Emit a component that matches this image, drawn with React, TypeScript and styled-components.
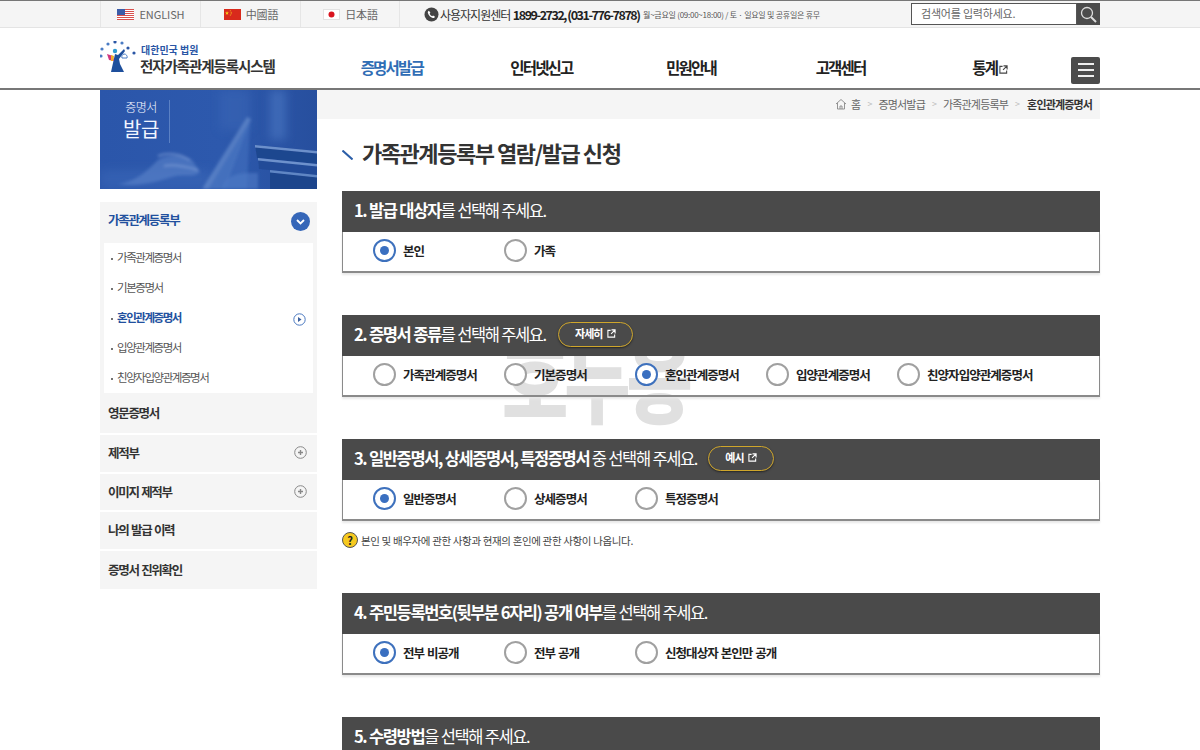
import React from "react";
import styled, { createGlobalStyle } from "styled-components";

const Global = createGlobalStyle`
  html, body { margin: 0; padding: 0; height: 750px; overflow: hidden; background: #fff; }
  body { font-family: "Noto Sans CJK KR", "Noto Sans", sans-serif; color: #333; }
  * { box-sizing: border-box; }
`;

const Wrap = styled.div`width: 1000px; margin: 0 auto; display: flex; align-items: stretch;`;

const TopBar = styled.div`
  height: 28px; background: #f5f5f5; border-top: 1px solid #777; border-bottom: 1px solid #e4e4e4;
`;
const LangCell = styled.a`
  width: 100px; display: flex; align-items: center; justify-content: center; gap: 3px;
  border-left: 1px solid #e6e6e6; font-size: 11px; color: #666; height: 26px; letter-spacing: -0.1px; padding-left: 1px;
  &:nth-child(3) { border-right: 1px solid #e6e6e6; }
`;
const Flag = styled.svg`width: 17px; height: 11px; display: block; margin-right: 2px;`;
const Support = styled.div`
  margin-left: 24px; display: flex; align-items: center; height: 26px; color: #333; font-size: 12px; letter-spacing: -1px; white-space: nowrap;
  svg { margin-right: 1px; }
  b { font-weight: 700; margin-left: 2.5px; font-size: 12.5px; letter-spacing: -1.45px; color: #222; }
  small { font-size: 8px; margin-left: 3.5px; color: #555; letter-spacing: -0.25px; }
`;
const Search = styled.div`
  margin-left: auto; display: flex; height: 22px; margin-top: 2px; width: 189px;
`;
const SearchInput = styled.div`
  flex: 1; border: 1px solid #555; background: #fff; font-size: 11px; color: #666; padding-left: 9px; line-height: 18px; letter-spacing: -0.2px;
`;
const SearchBtn = styled.div`width: 23px; background: #4c4c4c; display: flex; align-items: center; justify-content: center;`;

const Header = styled.div`height: 62px; border-bottom: 2px solid #777;`;
const HeaderIn = styled(Wrap)`height: 60px; align-items: center;`;
const Logo = styled.div`width: 217px; display: flex; align-items: center; height: 100%; padding-top: 2px;`;
const LogoText = styled.div`
  margin-left: 5px; display: flex; flex-direction: column;
  span { font-size: 10px; color: #2a56a5; font-weight: 700; line-height: 12px; letter-spacing: 0; padding-top: 1px; }
  strong { font-size: 14.5px; color: #333; font-weight: 700; line-height: 20px; letter-spacing: -1.1px; margin-left: -1px; }
`;
const Nav = styled.nav`flex: 1; display: flex; padding-top: 17px;`;
const NavItem = styled.a<{ $on?: boolean }>`
  flex: 1; text-align: center; font-size: 15.5px; font-weight: 700; letter-spacing: -1.8px;
  color: ${p => (p.$on ? "#2f6db5" : "#222")};
  svg { margin-left: 2px; vertical-align: 0; }
`;
const MenuBtn = styled.div`
  width: 29px; height: 27px; background: #4b4b4b; border-radius: 2px; margin-left: 6px; margin-top: 24px;
  display: flex; flex-direction: column; justify-content: center; align-items: center; gap: 4px;
  i { display: block; width: 16px; height: 2px; background: #eee; }
`;

const Side = styled.aside`width: 217px; flex: none;`;
const Banner = styled.div`height: 99px; position: relative; background: #2a56a8; overflow: hidden; svg { display: block; }`;
const BannerText = styled.div`
  position: absolute; left: 20px; top: 9px; color: #f2f5ff; text-align: center; width: 42px; font-weight: 300;
  span { display: block; font-size: 12px; line-height: 15px; letter-spacing: -0.6px; }
  b { display: block; font-size: 20px; line-height: 30px; font-weight: 400; letter-spacing: -0.5px; }
`;
const SideMenu = styled.ul`list-style: none; margin: 13px 0 0; padding: 0; background: #f5f5f5;`;
const SideItem = styled.li<{ $sep?: boolean; $first?: boolean; $h?: number; $pb?: number }>`
  height: ${p => p.$h ?? 39}px;
  padding: 0 10px ${p => (p.$pb ?? 2)}px 8px;
  display: flex; align-items: center; justify-content: space-between;
  font-size: 12.5px; font-weight: 700; letter-spacing: -1.3px; word-spacing: 1px; color: ${p => (p.$first ? "#22509e" : "#333")};
  border-bottom: ${p => (p.$sep ? "2px solid #fff" : "none")};
  svg { display: block; }
`;
const FirstIconGap = styled.span`display: block; margin-right: -3px; margin-top: 4px;`;
const SubMenu = styled.ul`list-style: none; margin: 0 4px; padding: 0; background: #fff; height: 150px;`;
const SubItem = styled.li<{ $on?: boolean }>`
  height: 30px; display: flex; align-items: center; justify-content: space-between; padding: 0 7px 2px 7px;
  font-size: 11.5px; letter-spacing: -1.45px; color: ${p => (p.$on ? "#22509e" : "#555")}; font-weight: ${p => (p.$on ? 700 : 400)};
  span::before { content: ""; display: inline-block; width: 2px; height: 2px; border-radius: 50%; background: #444; margin-right: 4px; vertical-align: 2px; }
  svg { margin-top: 4px; }
`;

const Main = styled.main`flex: 1; position: relative;`;
const Crumbs = styled.div`
  height: 29px; background: #f5f5f5; display: flex; align-items: center; justify-content: flex-end; padding: 0 8px 2px 0;
  font-size: 11px; color: #666; letter-spacing: -0.85px;
  em { font-style: normal; color: #bbb; margin: 0 7px; font-size: 9px; }
  b { color: #333; font-weight: 700; margin-left: 1px; }
  svg { margin-right: 4px; }
`;
const Content = styled.div`padding-left: 25px; position: relative;`;
const Title = styled.h2`
  margin: 0; height: 72px; display: flex; align-items: center; font-size: 22px; font-weight: 700; letter-spacing: -1.45px; color: #333; padding-bottom: 6px;
  svg { margin-right: 9px; margin-top: 5px; }
`;
const Watermark = styled.div`
  position: absolute; left: 185px; top: 209px; font-size: 72px; line-height: 96px; font-weight: 900; color: #e0e0e0; letter-spacing: -4px; z-index: 0; transform: scaleY(1.3);
`;
const Section = styled.section<{ $gap?: number }>`
  position: relative; margin-bottom: ${p => p.$gap ?? 42}px; z-index: 1;
`;
const SecHead = styled.div`
  height: 41px; background: #4a4a4a; color: #fff; display: flex; align-items: center; padding: 0 0 3px 12px; font-size: 16.5px; letter-spacing: -1.4px; word-spacing: 0.4px; font-weight: 400; white-space: nowrap;
`;
const HeadText = styled.span`
  b { font-weight: 700; }
`;
const Pill = styled.a<{ $w: number; $ml: number }>`
  width: ${p => p.$w}px; margin-left: ${p => p.$ml}px; height: 25px; border: 1.5px solid #cfa62b; border-radius: 13px; box-shadow: 0 1px 2px rgba(0,0,0,.5);
  display: flex; align-items: center; justify-content: center; font-size: 11px; font-weight: 700; letter-spacing: -0.9px; padding-bottom: 2px;
  svg { margin-left: 4px; }
`;
const SecBody = styled.div`
  height: 41px; border: 1px solid #8a8a8a; border-top: none; border-bottom: 2px solid #8a8a8a; box-shadow: 0 2px 2px #e8e8e8;
  display: flex; align-items: center; padding-left: 30px; padding-bottom: 3px;
`;
const Opt = styled.label`
  width: 131px; flex: none; display: flex; align-items: center; gap: 7px; font-size: 12.5px; font-weight: 700; letter-spacing: -0.95px; word-spacing: 1px; color: #222; white-space: nowrap;
`;
const Radio = styled.span<{ $on?: boolean }>`
  width: 23px; height: 23px; border-radius: 50%; flex: none; display: flex; align-items: center; justify-content: center; background: #fff;
  border: 2px solid ${p => (p.$on ? "#3e71bd" : "#a0a0a0")};
  &::after { content: ""; width: 9px; height: 9px; border-radius: 50%; background: ${p => (p.$on ? "#3a6fc0" : "transparent")}; }
`;
const Note = styled.div`
  display: flex; align-items: center; gap: 3px; height: 40px; margin-top: -1px; margin-bottom: 33px; font-size: 10.5px; letter-spacing: -0.35px; color: #444; position: relative; z-index: 1;
`;
const Help = styled.span`
  width: 16px; height: 16px; border-radius: 50%; background: #f6c91e; border: 1px solid #555; color: #222; font-size: 11px; font-weight: 700; display: flex; align-items: center; justify-content: center; letter-spacing: 0;
`;

const Ext = ({ c = "#fff", s = 9 }: { c?: string; s?: number }) => (
  <svg width={s} height={s} viewBox="0 0 10 10" fill="none" stroke={c} strokeWidth="1.2">
    <path d="M4 1.500H1v7.500h7.500V6" />
    <path d="M5 1h4v4M9 1 4.500 5.500" />
  </svg>
);

const USFlag = () => (
  <Flag viewBox="0 0 17 11">
    <rect width="17" height="11" fill="#fff" />
    {[0, 2, 4, 6, 8, 10].map(y => <rect key={y} y={y} width="17" height="1" fill="#d8504d" />)}
    <rect width="8" height="6" fill="#3b5ca8" />
  </Flag>
);
const CNFlag = () => (
  <Flag viewBox="0 0 17 11">
    <rect width="17" height="11" fill="#d92a1c" />
    <path d="M3 2l.5 1.400H5l-1.200.9.5 1.400L3 4.900l-1.300.8.5-1.400L1 3.400h1.500z" fill="#f7d417" />
    <circle cx="6.300" cy="1.800" r=".5" fill="#f7d417" /><circle cx="7.200" cy="3.200" r=".5" fill="#f7d417" />
    <circle cx="7.200" cy="4.800" r=".5" fill="#f7d417" /><circle cx="6.300" cy="6" r=".5" fill="#f7d417" />
  </Flag>
);
const JPFlag = () => (
  <Flag viewBox="0 0 17 11">
    <rect x=".5" y=".5" width="16" height="10" fill="#fff" stroke="#e2e2e2" />
    <circle cx="8.500" cy="5.500" r="3" fill="#d9141e" />
  </Flag>
);

const LogoMark = () => (
  <svg width="36" height="36" viewBox="0 0 36 36">
    {[[8,3],[15,1],[22,2],[28,7],[2,8],[34,12],[1,15]].map(([x, y], i) => (
      <circle key={i} cx={x} cy={y} r="1.600" fill={i % 2 ? "#2a56a5" : "#4a7cc4"} />
    ))}
    <path d="M11 31 15 13l3 1 6-6 1 2-6 8 1 5 4 8z" fill="#1e4f9c" />
    <circle cx="15" cy="10" r="2.200" fill="#2f9bd0" />
    <path d="M7 13l6 2 1 5-5-1z" fill="#d0367f" />
    <path d="M11 14l3 1-1 5h-2z" fill="#f0b02a" />
    <path d="M24 13a3 3 0 0 1 3 4h-5a3 3 0 0 1 2-4z" fill="none" stroke="#4a7cc4" strokeWidth="1" />
  </svg>
);

const BannerArt = () => (
  <svg width="217" height="99" viewBox="0 0 217 99">
    <defs>
      <linearGradient id="bg" x1="0" y1="0" x2="1" y2="0">
        <stop offset="0" stopColor="#2b56aa" />
        <stop offset=".55" stopColor="#2d59ad" />
        <stop offset="1" stopColor="#274f9e" />
      </linearGradient>
      <filter id="soft"><feGaussianBlur stdDeviation="1.6" /></filter>
      <filter id="softer"><feGaussianBlur stdDeviation="5" /></filter>
      <filter id="bk"><feGaussianBlur stdDeviation=".6" /></filter>
    </defs>
    <rect width="217" height="99" fill="url(#bg)" />
    <g filter="url(#softer)" opacity=".55">
      <rect x="170" y="0" width="16" height="50" fill="#4f7bc6" />
      <rect x="120" y="0" width="30" height="40" fill="#3a66b6" />
      <path d="M0 80h110v19H0z" fill="#3b68b8" />
    </g>
    <g filter="url(#soft)">
      <path d="M102 99 147 27l4 2-26 70z" fill="#6e94d2" opacity=".6" />
      <path d="M108 99 150 30l-3 69z" fill="#3e6cbc" opacity=".7" />
      <path d="M122 99c2-10 10-16 28-16h8v16z" fill="#4f7bc6" opacity=".6" />
      <path d="M18 94c18-2 30-14 40-24 10-6 22-5 34 0l8 12c-6 6-16 2-24 4-16 4-34 12-58 8z" fill="#5a84c9" opacity=".6" />
      <path d="M58 66c10-4 22-2 32 4M64 76c10-2 20 0 34 4" stroke="#8aa8dc" strokeWidth="2" fill="none" opacity=".55" />
    </g>
    <g filter="url(#bk)">
      <path d="M155 55l62 6v13l-60-6z" fill="#1f468f" />
      <path d="M155 55l62 6v2.500l-62-6z" fill="#7fa2da" opacity=".8" />
      <path d="M158 68l59 6v11l-58-6z" fill="#234c98" />
      <path d="M158 68l59 6v2.500l-59-6z" fill="#7fa2da" opacity=".8" />
      <path d="M170 80l47 5v14h-47z" fill="#1d448c" />
      <path d="M170 80l47 5v2.500l-47-5z" fill="#7097d2" opacity=".8" />
    </g>
    <rect x="69" y="10" width="1" height="43" fill="#6f93cf" opacity=".7" />
  </svg>
);

const PlusCircle = ({ c = "#888" }: { c?: string }) => (
  <svg width="13" height="13" viewBox="0 0 13 13">
    <circle cx="6.500" cy="6.500" r="5.800" fill="none" stroke={c} strokeWidth="1" />
    <path d="M6.500 4v5M4 6.500h5" stroke={c} strokeWidth="1.400" />
  </svg>
);

type O = { t: string; on?: boolean };
const SectionBlock: React.FC<{ head: React.ReactNode; pill?: React.ReactNode; opts: O[]; gap?: number }> = ({ head, pill, opts, gap }) => (
  <Section $gap={gap}>
    <SecHead><HeadText>{head}</HeadText>{pill}</SecHead>
    <SecBody>
      {opts.map(o => <Opt key={o.t}><Radio $on={o.on} />{o.t}</Opt>)}
    </SecBody>
  </Section>
);

export default function App() {
  return (
    <>
      <Global />
      <TopBar>
        <Wrap>
          <LangCell><USFlag />ENGLISH</LangCell>
          <LangCell><CNFlag />中國語</LangCell>
          <LangCell><JPFlag />日本語</LangCell>
          <Support>
            <svg width="15" height="15" viewBox="0 0 15 15">
              <circle cx="7.500" cy="7.500" r="7" fill="#444" />
              <path d="M5 3.800l1.400 1.900-.8 1c.5 1 1.400 1.900 2.500 2.500l1-.8 1.900 1.400c-.4 1-1.300 1.500-2.200 1.200C6.500 10.300 4.700 8.500 3.900 6c-.3-1 .2-1.800 1.100-2.200z" fill="#fff" />
            </svg>
            사용자지원센터<b>1899-2732, (031-776-7878)</b>
            <small>월~금요일 (09:00~18:00) / 토 · 일요일 및 공휴일은 휴무</small>
          </Support>
          <Search>
            <SearchInput>검색어를 입력하세요.</SearchInput>
            <SearchBtn>
              <svg width="19" height="19" viewBox="0 0 19 19" fill="none" stroke="#ddd">
                <circle cx="8" cy="8" r="5.500" strokeWidth="1.300" />
                <path d="M12 12l5 5" strokeWidth="2" />
              </svg>
            </SearchBtn>
          </Search>
        </Wrap>
      </TopBar>
      <Header>
        <HeaderIn>
          <Logo>
            <LogoMark />
            <LogoText>
              <span>대한민국 법원</span>
              <strong>전자가족관계등록시스템</strong>
            </LogoText>
          </Logo>
          <Nav>
            <NavItem $on>증명서발급</NavItem>
            <NavItem>인터넷신고</NavItem>
            <NavItem>민원안내</NavItem>
            <NavItem>고객센터</NavItem>
            <NavItem>통계<Ext c="#444" s={9} /></NavItem>
          </Nav>
          <MenuBtn><i /><i /><i /></MenuBtn>
        </HeaderIn>
      </Header>
      <Wrap>
        <Side>
          <Banner>
            <BannerArt />
            <BannerText><span>증명서</span><b>발급</b></BannerText>
          </Banner>
          <SideMenu>
            <SideItem $first $h={41} $pb={7}>
              가족관계등록부
              <FirstIconGap>
                <svg width="19" height="19" viewBox="0 0 19 19">
                  <circle cx="9.500" cy="9.500" r="9.500" fill="#3566b8" />
                  <path d="M6 8l3.500 3.500L13 8" fill="none" stroke="#fff" strokeWidth="1.800" />
                </svg>
              </FirstIconGap>
            </SideItem>
            <SubMenu>
              <SubItem><span>가족관계증명서</span></SubItem>
              <SubItem><span>기본증명서</span></SubItem>
              <SubItem $on>
                <span>혼인관계증명서</span>
                <svg width="13" height="13" viewBox="0 0 13 13">
                  <circle cx="6.500" cy="6.500" r="5.700" fill="none" stroke="#4a78c0" strokeWidth="1" />
                  <path d="M5 4l3.500 2.500L5 9z" fill="#3a5f9e" />
                </svg>
              </SubItem>
              <SubItem><span>입양관계증명서</span></SubItem>
              <SubItem><span>친양자입양관계증명서</span></SubItem>
            </SubMenu>
            <SideItem $sep $h={42}>영문증명서</SideItem>
            <SideItem $sep $h={39}>제적부<PlusCircle /></SideItem>
            <SideItem $sep $h={38}>이미지 제적부<PlusCircle /></SideItem>
            <SideItem $sep $h={39}>나의 발급 이력</SideItem>
            <SideItem $h={38}>증명서 진위확인</SideItem>
          </SideMenu>
        </Side>
        <Main>
          <Crumbs>
            <svg width="12" height="12" viewBox="0 0 12 12" fill="none" stroke="#888" strokeWidth=".9">
              <path d="M1 6l5-4.500L11 6M2.500 5v6h7V5M5 11V8h2v3" />
            </svg>
            홈<em>&gt;</em>증명서발급<em>&gt;</em>가족관계등록부<em>&gt;</em><b>혼인관계증명서</b>
          </Crumbs>
          <Content>
            <Title>
              <svg width="11" height="10" viewBox="0 0 11 10"><path d="M0.500 0.500 10.500 9.500" stroke="#2b5ea8" strokeWidth="2" /></svg>
              가족관계등록부 열람/발급 신청
            </Title>
            <Watermark>호두용</Watermark>
            <SectionBlock
              head={<><b>1. 발급 대상자</b>를 선택해 주세요.</>}
              opts={[{ t: "본인", on: true }, { t: "가족" }]}
            />
            <SectionBlock
              head={<><b>2. 증명서 종류</b>를 선택해 주세요.</>}
              pill={<Pill $w={75} $ml={12}>자세히<Ext /></Pill>}
              opts={[{ t: "가족관계증명서" }, { t: "기본증명서" }, { t: "혼인관계증명서", on: true }, { t: "입양관계증명서" }, { t: "친양자입양관계증명서" }]}
            />
            <SectionBlock
              gap={0}
              head={<><b>3. 일반증명서, 상세증명서, 특정증명서</b> 중 선택해 주세요.</>}
              pill={<Pill $w={66} $ml={11}>예시<Ext /></Pill>}
              opts={[{ t: "일반증명서", on: true }, { t: "상세증명서" }, { t: "특정증명서" }]}
            />
            <Note><Help>?</Help>본인 및 배우자에 관한 사항과 현재의 혼인에 관한 사항이 나옵니다.</Note>
            <SectionBlock
              head={<><b>4. 주민등록번호(뒷부분 6자리) 공개 여부</b>를 선택해 주세요.</>}
              opts={[{ t: "전부 비공개", on: true }, { t: "전부 공개" }, { t: "신청대상자 본인만 공개" }]}
            />
            <Section>
              <SecHead><HeadText><b>5. 수령방법</b>을 선택해 주세요.</HeadText></SecHead>
            </Section>
          </Content>
        </Main>
      </Wrap>
    </>
  );
}
